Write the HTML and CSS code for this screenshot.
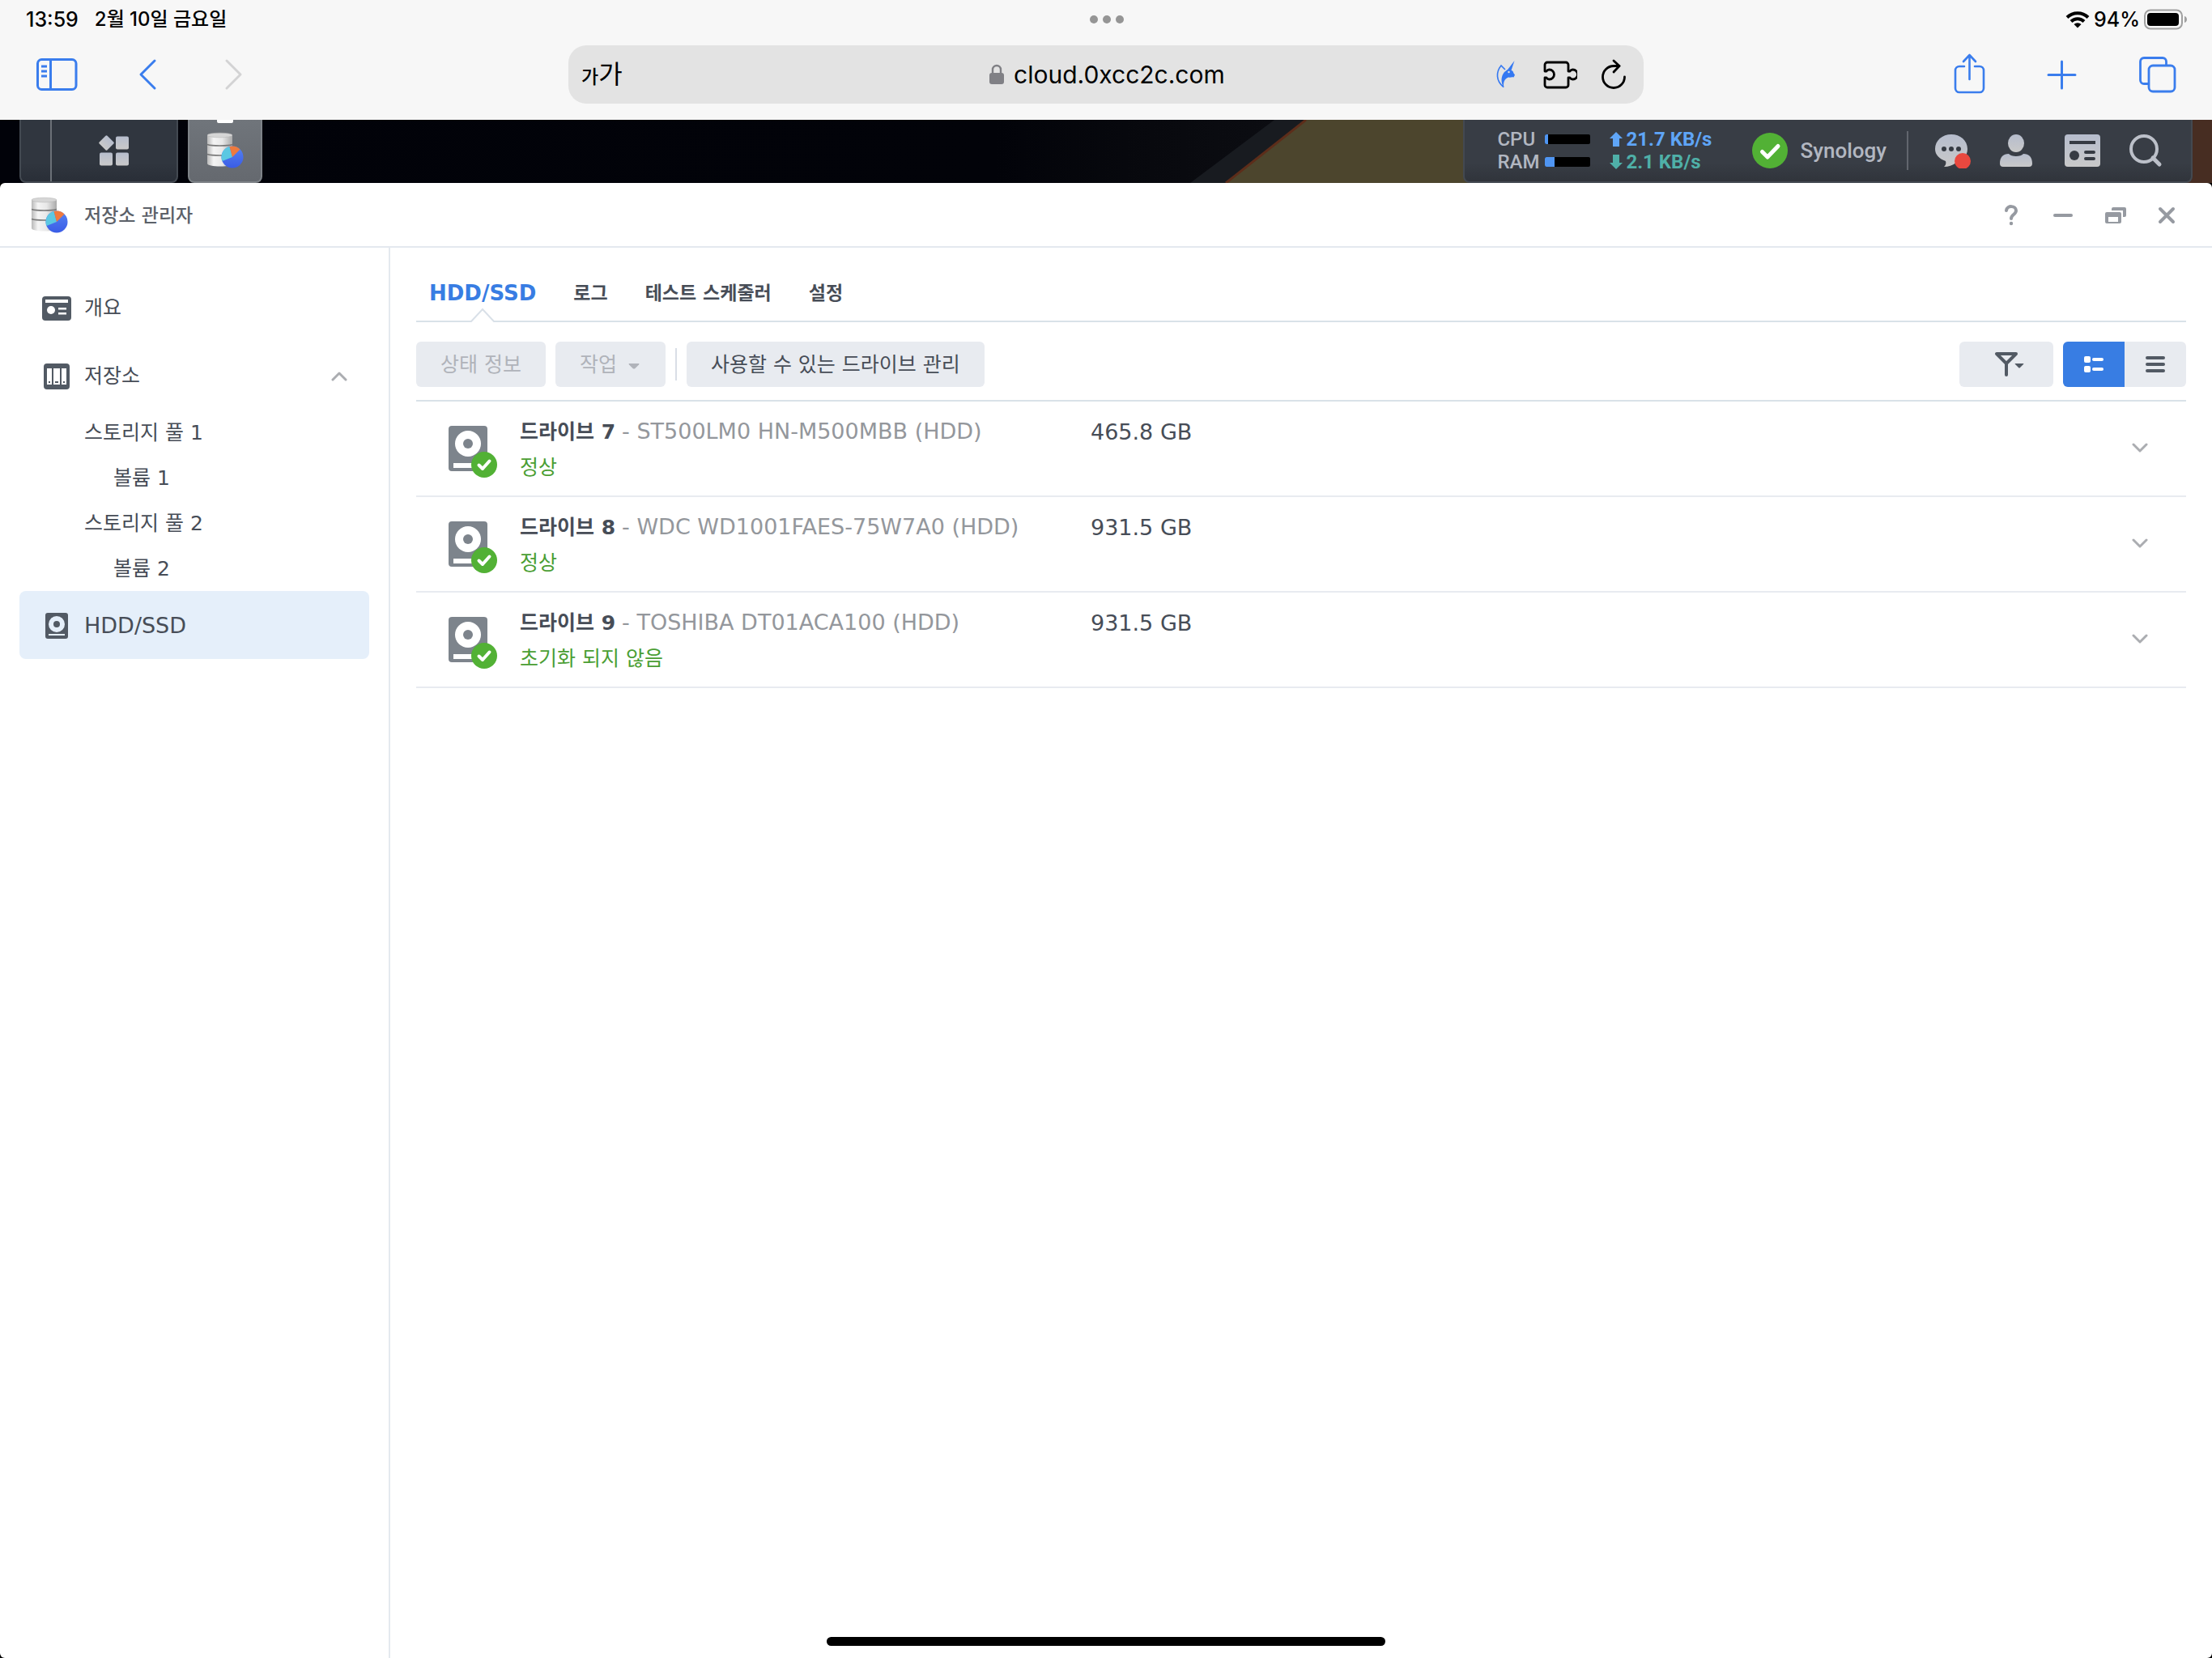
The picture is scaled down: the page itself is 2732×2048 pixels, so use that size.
FILE: index.html
```html
<!DOCTYPE html>
<html lang="ko">
<head>
<meta charset="utf-8">
<meta name="viewport" content="width=device-width, initial-scale=1">
<title>저장소 관리자</title>
<link rel="stylesheet" href="styles.css">
</head>
<body>
<svg class="defs" aria-hidden="true">
  <defs>
    <linearGradient id="tray-fill" x1="0" y1="0" x2="0" y2="1"><stop offset="0" stop-color="#b6bdcd"/><stop offset="1" stop-color="#c9c9c9"/></linearGradient>
    <linearGradient id="metal" x1="0" y1="0" x2="1" y2="0"><stop offset="0" stop-color="#b9b9b9"/><stop offset=".25" stop-color="#f4f4f4"/><stop offset=".6" stop-color="#e8e8e8"/><stop offset="1" stop-color="#a9a9a9"/></linearGradient>
    <linearGradient id="pie-blue" x1="0" y1="0" x2="0" y2="1"><stop offset="0" stop-color="#5583f2"/><stop offset="1" stop-color="#3a5ce6"/></linearGradient>
    <symbol id="storage" viewBox="0 0 46 46">
      <path d="M1 4v35c0 2 7 3.500 16 3.500s15-1.500 15-3.500V4z" fill="url(#metal)"/>
      <ellipse cx="16.500" cy="4" rx="15.500" ry="2.800" fill="#d6d6d6" stroke="#b5b5b5" stroke-width=".6"/>
      <path d="M1 15.500c6 2 25 2 31 0M1 27.500c6 2 25 2 31 0" fill="none" stroke="#777" stroke-width="1.500"/>
      <circle cx="32" cy="31" r="13.500" fill="url(#pie-blue)"/>
      <path d="M32 31 28.500 18A13.500 13.500 0 0 0 19.500 36z" fill="#5bc8e2"/>
      <path d="M32 31 28.500 18A13.500 13.500 0 0 1 41.500 21.400z" fill="#ee7a3e"/>
    </symbol>
    <symbol id="drive" viewBox="0 0 60 64">
      <rect width="48" height="56" rx="4" fill="#7d848c"/>
      <circle cx="24" cy="22" r="16" fill="#fff"/>
      <circle cx="24" cy="22" r="6" fill="#7d848c"/>
      <rect x="6" y="46" width="36" height="6" fill="#fff"/>
      <circle cx="44" cy="48" r="16" fill="#52b135"/>
      <path d="m37.500 48.500 4.500 4.500 8.500-9.500" fill="none" stroke="#fff" stroke-width="4" stroke-linecap="round" stroke-linejoin="round"/>
    </symbol>
    <symbol id="chevron" viewBox="0 0 20 12"><path d="m2 2 8 8 8-8" fill="none" stroke="#abadb1" stroke-width="3" stroke-linecap="round" stroke-linejoin="round"/></symbol>
  </defs>
</svg>

<header class="browser">
  <div class="status">
    <div class="status-side"><span class="clock">13:59</span><span class="date">2월 10일 금요일</span></div>
    <svg width="44" height="12" viewBox="0 0 44 12" fill="#959595"><circle cx="6" cy="6" r="5"/><circle cx="22" cy="6" r="5"/><circle cx="38" cy="6" r="5"/></svg>
    <div class="status-side status-end">
      <svg width="30" height="22" viewBox="0 0 30 22" fill="none" stroke="#000" stroke-width="4"><path d="M2 8.500a18.500 18.500 0 0 1 26 0M7 13.500a11.500 11.500 0 0 1 16 0"/><path d="m15 21.500-4.500-4.500a6.500 6.500 0 0 1 9 0z" fill="#000" stroke="none"/></svg>
      <span class="clock">94%</span>
      <svg width="54" height="26" viewBox="0 0 54 26"><rect x="1" y="1.500" width="46" height="23" rx="7" fill="none" stroke="#a0a0a0" stroke-width="2"/><rect x="4" y="5" width="39" height="16" rx="4"/><path d="M50 9c4 1 4 7 0 8z" fill="#a0a0a0"/></svg>
    </div>
  </div>
  <div class="toolbar">
    <div class="tools">
      <button aria-label="사이드바"><svg width="52" height="44" viewBox="0 0 52 44" fill="none" stroke="#3a7ded" stroke-width="3"><rect x="2.500" y="3.500" width="47.500" height="37" rx="5"/><path d="M18.500 4v36M7 12h7M7 18h7M7 24h7"/></svg></button>
      <button aria-label="뒤로"><svg width="44" height="44" viewBox="0 0 44 44" fill="none" stroke="#3a7ded" stroke-width="3" stroke-linecap="round" stroke-linejoin="round"><path d="M31 5 14 22l17 17"/></svg></button>
      <button aria-label="앞으로" disabled><svg width="44" height="44" viewBox="0 0 44 44" fill="none" stroke="#d3d3d4" stroke-width="3" stroke-linecap="round" stroke-linejoin="round"><path d="m12 5 17 17-17 17"/></svg></button>
    </div>
    <div class="address">
      <button class="text-size" aria-label="글자 크기"><span class="small">가</span><span class="large">가</span></button>
      <label class="url">
        <svg width="18" height="26" viewBox="0 0 18 26"><rect y="11" width="18" height="14" rx="3" fill="#808085"/><path d="M4 12V7a5 5 0 0 1 10 0v5" fill="none" stroke="#808085" stroke-width="2.400"/></svg>
        <input type="text" value="cloud.0xcc2c.com" aria-label="주소">
      </label>
      <div class="address-tools">
        <button aria-label="유니콘"><svg width="28" height="36" viewBox="0 0 28 36" fill="#3478f2"><path d="M22.500 1 12.500 14l5 2z"/><path d="M9.500 34.500C5 27 6 20 10 15l4-3 5 1c2 1 2 2 2.500 3.500l1.500 2-1.500 3c-3-.5-4 .5-6.500 0-4.500 1.500-7 6-5.500 13z"/><path d="M9 33.500C-.500 26-.500 15 6 7l5 5" fill="none" stroke="#3478f2" stroke-width="1.600"/><circle cx="15.500" cy="15" r="1.200" fill="#e3e3e3"/></svg></button>
        <button aria-label="확장 프로그램"><svg width="42" height="36" viewBox="0 0 42 36" fill="none" stroke="#000" stroke-width="2.800" stroke-linejoin="round" stroke-linecap="round"><path d="M2 14V6a3 3 0 0 1 3-3h23a3 3 0 0 1 3 3v8h2c1-1.500 2-2 3.500-2a5 5 0 0 1 0 12c-1.500 0-2.500-.5-3.500-2h-2v9a3 3 0 0 1-3 3H5a3 3 0 0 1-3-3v-9h2c1 1.500 2 2 3.500 2a6 6 0 0 0 0-12C6 12 5 12.500 4 14z"/></svg></button>
        <button aria-label="새로 고침"><svg width="30" height="38" viewBox="0 0 30 38" fill="none" stroke="#000" stroke-width="2.800" stroke-linecap="round" stroke-linejoin="round"><path d="M28.500 22A13.500 13.500 0 1 1 15 8.500h7"/><path d="m15 2 7 6.500-7 7.500"/></svg></button>
      </div>
    </div>
    <div class="tools tools-end">
      <button aria-label="공유"><svg width="48" height="52" viewBox="0 0 48 52" fill="none" stroke="#3a7ded" stroke-width="2.600" stroke-linecap="round" stroke-linejoin="round"><path d="M18 16h-6a5 5 0 0 0-5 5v22a5 5 0 0 0 5 5h25a5 5 0 0 0 5-5V21a5 5 0 0 0-5-5h-6M24.500 32V3M17 10l7.500-8 7.500 8"/></svg></button>
      <button aria-label="새 탭"><svg width="48" height="52" viewBox="0 0 48 52" fill="none" stroke="#3a7ded" stroke-width="3" stroke-linecap="round"><path d="M22.500 10v33M6 26.500h33"/></svg></button>
      <button aria-label="탭 보기"><svg width="48" height="52" viewBox="0 0 48 52" fill="none" stroke="#3a7ded" stroke-width="2.800"><rect x="14" y="15" width="32" height="32" rx="5"/><path d="M14 37.500H8a4.500 4.500 0 0 1-4.500-4.500V10A4.500 4.500 0 0 1 8 5.500h23a4.500 4.500 0 0 1 4.500 4.500v5"/></svg></button>
    </div>
  </div>
</header>

<div class="taskbar">
  <svg class="wallpaper" viewBox="0 0 2732 78" preserveAspectRatio="xMidYMid slice" aria-hidden="true">
    <defs><linearGradient id="sky"><stop offset="0" stop-color="#010209"/><stop offset=".45" stop-color="#020309"/><stop offset=".52" stop-color="#08090e"/><stop offset=".58" stop-color="#0c0d12"/></linearGradient></defs>
    <rect width="2732" height="78" fill="url(#sky)"/>
    <path d="M1574 0h39L1514 78h-44z" fill="#181b20"/>
    <path d="M1613 0 1514 78H1900V0z" fill="#4c452d"/>
    <path d="M1613 0 1514 78" stroke="#5d2d1a" stroke-width="3"/>
    <rect x="2700" width="32" height="78" fill="#472d22"/>
  </svg>
  <div class="launcher">
    <button class="launch-edge" aria-label="바탕 화면 보기"></button>
    <button class="launch-menu" aria-label="메인 메뉴"><svg width="40" height="40" viewBox="0 0 40 40" fill="url(#tray-fill)"><rect x="3.500" y="3.500" width="14" height="14" rx="1.500" transform="rotate(45 10.500 10.500)"/><rect x="22" y="2.500" width="16" height="16" rx="2"/><rect x="2" y="22.500" width="16" height="16" rx="2"/><rect x="22" y="22.500" width="16" height="16" rx="2"/></svg></button>
  </div>
  <button class="task" aria-label="저장소 관리자"><svg width="46" height="46"><use href="#storage"/></svg></button>
  <div class="tray">
    <div class="monitor">
      <span>CPU</span><div class="bar"><div class="bar-fill" style="width:7%"></div></div>
      <span class="rate up"><svg width="16" height="18" viewBox="0 0 16 18" fill="currentColor"><path d="M8 0l8 8h-4v10H4V8H0z"/></svg>21.7 KB/s</span>
      <span>RAM</span><div class="bar"><div class="bar-fill" style="width:20%"></div></div>
      <span class="rate down"><svg width="16" height="18" viewBox="0 0 16 18" fill="currentColor"><path d="M8 18l8-8h-4V0H4v10H0z"/></svg>2.1 KB/s</span>
    </div>
    <div class="health"><svg width="44" height="44" viewBox="0 0 44 44"><circle cx="22" cy="22" r="22" fill="#52b135"/><path d="m12.500 23.500 6.500 6.500 13-13.500" fill="none" stroke="#fff" stroke-width="5" stroke-linecap="round" stroke-linejoin="round"/></svg>Synology</div>
    <div class="tray-icons">
      <button aria-label="알림"><svg width="44" height="44" viewBox="0 0 44 44"><path d="M20 2c11 0 20 7.500 20 18 0 9-7 15-14 17-5 3.500-9 5-15 5 2-2 3-4 2-7C5 32 0 27 0 20 0 9.500 9 2 20 2z" fill="url(#tray-fill)"/><g fill="#363b43"><circle cx="11" cy="20" r="3"/><circle cx="20" cy="20" r="3"/><circle cx="29" cy="20" r="3"/></g><circle cx="34" cy="35" r="10" fill="#e9483f"/></svg></button>
      <button aria-label="옵션"><svg width="44" height="44" viewBox="0 0 44 44" fill="url(#tray-fill)"><ellipse cx="20" cy="13" rx="10" ry="11"/><path d="M0 38c0-8 4-12 11-12 3 4 15 4 18 0 7 0 11 4 11 12q0 4-4 4H4q-4 0-4-4z"/></svg></button>
      <button aria-label="위젯"><svg width="44" height="44" viewBox="0 0 44 44"><rect y="2" width="44" height="40" rx="4" fill="url(#tray-fill)"/><path d="M6 10h32v4H6zM26 22h10a2 2 0 0 1 0 4H26a2 2 0 0 1 0-4zm0 8h10a2 2 0 0 1 0 4H26a2 2 0 0 1 0-4z" fill="#363b43"/><circle cx="12" cy="28" r="6" fill="#363b43"/></svg></button>
      <button aria-label="검색"><svg width="44" height="44" viewBox="0 0 44 44" fill="none" stroke="#bcc0c9" stroke-width="4"><circle cx="18" cy="20" r="16"/><path d="m29 31 8 8" stroke-width="5" stroke-linecap="round"/></svg></button>
    </div>
  </div>
</div>

<div class="window">
  <header class="titlebar">
    <svg width="46" height="46"><use href="#storage"/></svg>
    <h1>저장소 관리자</h1>
    <div class="window-tools">
      <button aria-label="도움말"><svg width="28" height="28" viewBox="0 0 28 28" fill="none" stroke="#969aa1" stroke-width="4" stroke-linecap="round"><path d="M8 8c1-7 12-6 12 0 0 5-6 5-6 10"/><circle cx="14" cy="24" r="2.200" fill="#969aa1" stroke="none"/></svg></button>
      <button aria-label="최소화"><svg width="28" height="28" viewBox="0 0 28 28"><rect x="2" y="12" width="24" height="4" rx="2" fill="#969aa1"/></svg></button>
      <button aria-label="이전 크기로"><svg width="28" height="28" viewBox="0 0 28 28" fill="#969aa1"><path d="M10 6a2 2 0 0 1 2-2h14a2 2 0 0 1 2 2v8a2 2 0 0 1-2 2h-2V8H10z"/><path fill-rule="evenodd" d="M4 10h16a2 2 0 0 1 2 2v10a2 2 0 0 1-2 2H4a2 2 0 0 1-2-2V12a2 2 0 0 1 2-2zm2 6v6h12v-6z"/></svg></button>
      <button aria-label="닫기"><svg width="28" height="28" viewBox="0 0 28 28" stroke="#969aa1" stroke-width="4" stroke-linecap="round"><path d="m6 6 16 16M22 6 6 22"/></svg></button>
    </div>
  </header>
  <div class="body">
    <nav class="sidebar" aria-label="저장소">
      <a class="item" href="#overview"><svg width="36" height="36" viewBox="0 0 36 36"><rect y="3" width="36" height="30" rx="4" fill="#525a64"/><path d="M4 7h28v4H4zM20 17h10v2.500H20zm0 6h10v2.500H20z" fill="#fff"/><circle cx="11" cy="20" r="5" fill="#fff"/></svg>개요</a>
      <a class="item" href="#storage-pools"><svg width="36" height="36" viewBox="0 0 36 36"><rect x="2" y="2" width="32" height="32" rx="4" fill="#525a64"/><path d="M6 8h6v20H6zm8 0h8v20h-8zm10 0h6v20h-6z" fill="#fff"/><path d="M8 24h2v2H8zm8 0h4v2h-4zm10 0h2v2h-2z" fill="#525a64"/></svg>저장소<svg class="fold" width="20" height="12"><use href="#chevron"/></svg></a>
      <a class="sub" href="#pool1">스토리지 풀 1</a>
      <a class="sub volume" href="#volume1">볼륨 1</a>
      <a class="sub" href="#pool2">스토리지 풀 2</a>
      <a class="sub volume" href="#volume2">볼륨 2</a>
      <a class="item latin selected" href="#hdd" aria-current="page"><svg width="36" height="36" viewBox="0 0 36 36"><rect x="4" y="2" width="28" height="32" rx="3" fill="#525a64"/><circle cx="18" cy="16" r="10" fill="#e5effa"/><circle cx="18" cy="16" r="4" fill="#525a64"/><path d="M8 28h20v2H8z" fill="#e5effa"/></svg>HDD/SSD</a>
    </nav>
    <main>
      <div class="tabs" role="tablist">
        <button class="tab active" role="tab" aria-selected="true">HDD/SSD<svg class="pointer" width="32" height="18" viewBox="0 0 32 18"><path d="M1 18v-2L15.500 1.500 31 16v2z" fill="#fff"/><path d="M1 17h1L16 2l14 15h1" fill="none" stroke="#d9e0e8" stroke-width="2"/></svg></button>
        <button class="tab" role="tab" aria-selected="false">로그</button>
        <button class="tab" role="tab" aria-selected="false">테스트 스케줄러</button>
        <button class="tab" role="tab" aria-selected="false">설정</button>
      </div>
      <div class="actions">
        <button class="btn" disabled>상태 정보</button>
        <button class="btn" disabled>작업<svg width="18" height="10" viewBox="0 0 18 10" fill="#b0b3ba"><path d="M3 3h12q1 0 0 1.500L10.500 9q-1.500 1-3 0L3 4.500Q2 3 3 3z"/></svg></button>
        <span class="divider"></span>
        <button class="btn">사용할 수 있는 드라이브 관리</button>
        <button class="btn filter" aria-label="필터"><svg width="44" height="32" viewBox="0 0 44 32"><path d="M10 3h24L22 15zM22 15v14" fill="none" stroke="#525a64" stroke-width="4" stroke-linejoin="round" stroke-linecap="round"/><path d="M33 15h10q1 0 0 1l-4 4q-1 1-2 0l-4-4q-1-1 0-1z" fill="#525a64"/></svg></button>
        <div class="views">
          <button class="view on" aria-label="자세히 보기" aria-pressed="true"><svg width="24" height="20" viewBox="0 0 24 20" fill="#fff"><rect width="8" height="8" rx="2"/><rect y="12" width="8" height="8" rx="2"/><rect x="10" y="2" width="14" height="4" rx="2"/><rect x="10" y="14" width="14" height="4" rx="2"/></svg></button>
          <button class="view" aria-label="목록 보기" aria-pressed="false"><svg width="24" height="20" viewBox="0 0 24 20" fill="#525a64"><rect width="24" height="4" rx="2"/><rect y="8" width="24" height="4" rx="2"/><rect y="16" width="24" height="4" rx="2"/></svg></button>
        </div>
      </div>
      <ul class="drives">
        <li class="drive">
          <svg class="drive-icon" width="60" height="64"><use href="#drive"/></svg>
          <div class="drive-info"><p><strong>드라이브 7</strong> <span class="model">- ST500LM0 HN-M500MBB (HDD)</span></p><p class="state">정상</p></div>
          <p class="size">465.8 GB</p>
          <button class="expand" aria-label="펼치기"><svg width="20" height="12"><use href="#chevron"/></svg></button>
        </li>
        <li class="drive">
          <svg class="drive-icon" width="60" height="64"><use href="#drive"/></svg>
          <div class="drive-info"><p><strong>드라이브 8</strong> <span class="model">- WDC WD1001FAES-75W7A0 (HDD)</span></p><p class="state">정상</p></div>
          <p class="size">931.5 GB</p>
          <button class="expand" aria-label="펼치기"><svg width="20" height="12"><use href="#chevron"/></svg></button>
        </li>
        <li class="drive">
          <svg class="drive-icon" width="60" height="64"><use href="#drive"/></svg>
          <div class="drive-info"><p><strong>드라이브 9</strong> <span class="model">- TOSHIBA DT01ACA100 (HDD)</span></p><p class="state">초기화 되지 않음</p></div>
          <p class="size">931.5 GB</p>
          <button class="expand" aria-label="펼치기"><svg width="20" height="12"><use href="#chevron"/></svg></button>
        </li>
      </ul>
    </main>
  </div>
</div>
<div class="home-bar"></div>
</body>
</html>
```
FILE: styles.css
```css
* { box-sizing: border-box; }

body {
  margin: 0;
  min-height: 100vh;
  display: flex;
  flex-direction: column;
  background: #000;
  color: #474d57;
  font: 25px/44px "DejaVu Sans", "Noto Sans CJK KR", sans-serif;
}

button {
  padding: 0;
  border: 0;
  background: none;
  color: inherit;
  font: inherit;
}

svg { display: block; flex: none; }
a { color: inherit; text-decoration: none; }
h1, p, ul { margin: 0; padding: 0; }
.defs { position: absolute; width: 0; height: 0; }

/* Browser chrome */
.browser {
  background: #f7f7f7;
  color: #000;
  font-family: Inter, "Noto Sans CJK KR", sans-serif;
}

.status {
  display: grid;
  grid-template-columns: 1fr auto 1fr;
  align-items: center;
  height: 48px;
  padding: 0 30px 0 32px;
}

.status-side { display: flex; align-items: center; gap: 20px; }
.status-end { justify-content: flex-end; gap: 5px; }
.clock { font-size: 25px; font-weight: 500; }
.date { font-size: 24px; font-weight: 500; }

.toolbar {
  display: grid;
  grid-template-columns: 1fr minmax(0, 1328px) 1fr;
  align-items: center;
  height: 100px;
  padding-bottom: 12px;
}

.tools { display: flex; align-items: center; gap: 64px; padding: 0 44px; }
.tools-end { justify-content: flex-end; gap: 68px; }

.address {
  display: grid;
  grid-template-columns: 1fr auto 1fr;
  align-items: center;
  height: 72px;
  padding: 0 22px 0 16px;
  border-radius: 22px;
  background: #e3e3e3;
}

.text-size { justify-self: start; display: flex; align-items: baseline; padding-top: 2px; }
.small { font-size: 23px; font-weight: 500; }
.large { font-size: 32px; }

.url { display: flex; align-items: center; gap: 12px; padding-left: 16px; }
.url input {
  width: 268px;
  padding: 0;
  border: 0;
  background: none;
  color: #000;
  font: 30px/44px Inter, sans-serif;
}

.address-tools { justify-self: end; display: flex; align-items: center; gap: 30px; }

/* Desktop taskbar */
.taskbar {
  position: relative;
  display: flex;
  gap: 12px;
  height: 78px;
  padding: 0 24px;
  overflow: hidden;
}

.wallpaper { position: absolute; inset: 0; width: 100%; height: 100%; }

.launcher, .task, .tray {
  position: relative;
  display: flex;
  align-items: center;
  border: 2px solid #434951;
  border-top: 0;
  border-radius: 0 0 8px 8px;
}

.launcher { width: 196px; background: linear-gradient(#30363f 70%, #292e37); }
.launch-edge { width: 38px; height: 100%; border-right: 2px solid #6b7077; }
.launch-menu { flex: 1; display: grid; place-items: center; }

.task { justify-content: center; width: 92px; background: linear-gradient(#70757b, #65696f); border-color: #7e8388; }
.task::before {
  content: "";
  position: absolute;
  top: 0;
  width: 20px;
  height: 4px;
  border-radius: 0 0 2px 2px;
  background: #fff;
}

.tray {
  margin-left: auto;
  padding: 0 32px 0 40px;
  background: linear-gradient(#383d45 70%, #30343b);
  color: #b2b7c1;
  font-family: Roboto, sans-serif;
  font-size: 24px;
  font-weight: 500;
}

.monitor {
  display: grid;
  grid-template-columns: 59px 56px auto;
  align-items: center;
  line-height: 28px;
}

.bar { height: 12px; border-radius: 2px; background: #000; overflow: hidden; }
.bar-fill { height: 100%; background: #4f95f2; }
.rate { display: flex; align-items: center; gap: 4px; margin-left: 24px; font-weight: 700; }
.up { color: #5fa5f7; }
.down { color: #4fb0a8; }

.health {
  display: flex;
  align-items: center;
  gap: 15px;
  margin-left: 50px;
  padding-right: 25px;
  border-right: 2px solid #62666e;
  line-height: 48px;
  font-size: 26px;
}

.tray-icons { display: flex; gap: 36px; margin-left: 33px; }

/* Application window */
.window {
  flex: 1;
  display: flex;
  flex-direction: column;
  border-radius: 6px;
  background: #fff;
}

.titlebar {
  display: flex;
  align-items: center;
  gap: 20px;
  height: 80px;
  padding: 2px 42px 0 38px;
  border-bottom: 2px solid #e4e9ef;
}

h1 { color: #5c6169; font-size: 23px; font-weight: 500; }
.window-tools { display: flex; gap: 36px; margin-left: auto; }

.body { flex: 1; display: flex; }

.sidebar {
  flex: none;
  width: 482px;
  padding: 32px 24px;
  border-right: 2px solid #e4e9ef;
}

.item, .sub { display: flex; align-items: center; padding-top: 2px; }
.item { gap: 16px; height: 84px; padding-right: 27px; padding-left: 28px; border-radius: 8px; }
.fold { margin-left: auto; transform: rotate(180deg); }
.sub { height: 56px; padding-left: 80px; }
.volume { padding-left: 116px; }
.latin, .model, .size { font-size: 27px; }
.selected { background: #e5effa; }

main { flex: 1; min-width: 0; padding: 22px 32px; }

.tabs {
  display: flex;
  gap: 46px;
  padding-left: 16px;
  border-bottom: 2px solid #d9e2e8;
  line-height: 68px;
}

.tab { position: relative; font-size: 23px; font-weight: 700; }
.active { color: #387de3; font-size: 26px; }
.pointer { position: absolute; left: 50%; bottom: -2px; margin-left: -16px; }

.actions {
  display: flex;
  align-items: center;
  gap: 12px;
  padding: 24px 0 16px;
  border-bottom: 2px solid #d9e2e8;
}

.btn {
  display: flex;
  align-items: center;
  justify-content: center;
  gap: 12px;
  height: 56px;
  padding: 2px 30px 0;
  border-radius: 6px;
  background: #e8ebf0;
}

.btn:disabled { color: #b0b3ba; }
.divider { width: 2px; height: 40px; background: #d9dee6; }
.filter { width: 116px; margin-left: auto; padding: 0; }

.views { display: flex; border-radius: 6px; background: #e8ebf0; overflow: hidden; }
.view { display: grid; place-items: center; width: 76px; height: 56px; }
.on { background: #387de3; }

.drives { list-style: none; }

.drive {
  display: grid;
  grid-template-columns: 88px 705px 1fr 20px;
  align-items: start;
  height: 118px;
  padding: 16px 47px 12px 40px;
  border-bottom: 2px solid #e8ebf0;
}

.drive p { height: 44px; }
.drive-icon { margin-top: 14px; }
.model { color: #94979c; line-height: 1; }
.state { color: #4a9e33; }
.expand { align-self: center; padding-bottom: 6px; }

.home-bar {
  position: fixed;
  bottom: 15px;
  left: 50%;
  width: 690px;
  height: 11px;
  margin-left: -345px;
  border-radius: 6px;
  background: #000;
}
```
